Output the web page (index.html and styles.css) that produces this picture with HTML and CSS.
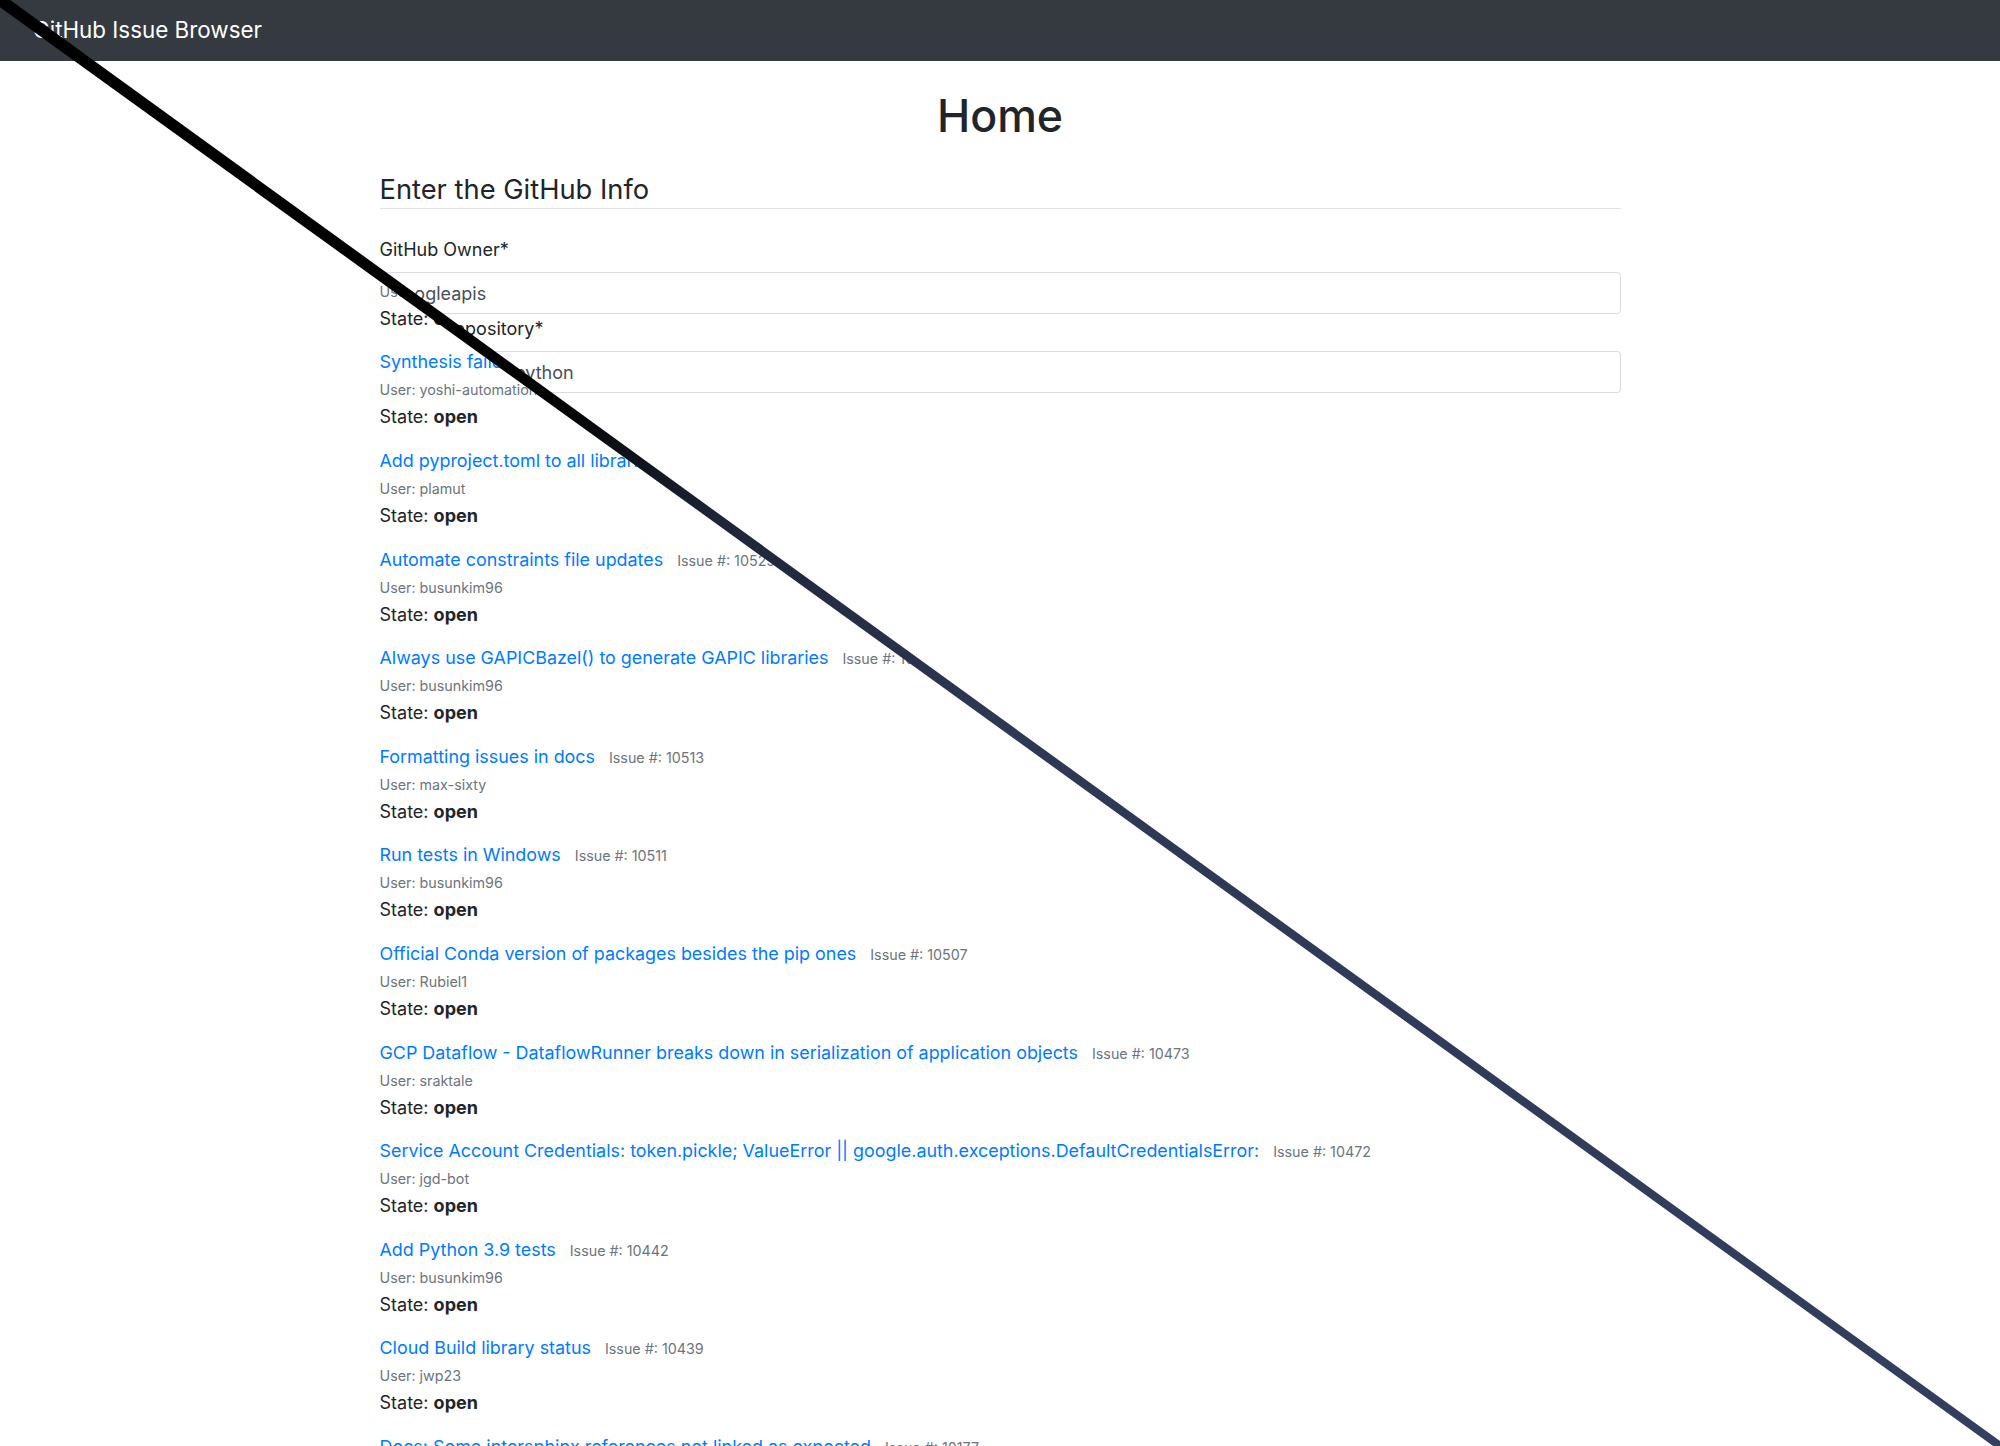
FILE: index.html
```html
<!DOCTYPE html>
<html lang="en">
<head>
<meta charset="utf-8">
<title>GitHub Issue Browser</title>
<link rel="stylesheet" href="styles.css">
</head>
<body>
<nav class="navbar"><span class="brand">GitHub Issue Browser</span></nav>
<div class="stage">
  <section class="layer layer-form">
    <div class="container">
      <h1 class="page-title">Home</h1>
      <h4 class="section-title">Enter the GitHub Info</h4>
      <form class="info-form">
        <label class="field-label" for="owner">GitHub Owner*</label>
        <input class="field-input" id="owner" type="text" value="googleapis">
        <label class="field-label" for="repo">GitHub Repository*</label>
        <input class="field-input" id="repo" type="text" value="google-cloud-python">
      </form>
    </div>
  </section>
  <section class="layer layer-list">
    <div class="container list-container">
      <div class="issue">
        <div class="issue-head"><a class="issue-link" href="#">Synthesis failed for google-cloud-python</a><span class="issue-num">Issue #: 10540</span></div>
        <div class="issue-user">User: yoshi-automation</div>
        <div class="issue-state">State: <b>open</b></div>
      </div>
      <div class="issue">
        <div class="issue-head"><a class="issue-link" href="#">Synthesis failed.</a><span class="issue-num">Issue #: 10531</span></div>
        <div class="issue-user">User: yoshi-automation</div>
        <div class="issue-state">State: <b>open</b></div>
      </div>
      <div class="issue">
        <div class="issue-head"><a class="issue-link" href="#">Add pyproject.toml to all libraries</a><span class="issue-num">Issue #: 10529</span></div>
        <div class="issue-user">User: plamut</div>
        <div class="issue-state">State: <b>open</b></div>
      </div>
      <div class="issue">
        <div class="issue-head"><a class="issue-link" href="#">Automate constraints file updates</a><span class="issue-num">Issue #: 10525</span></div>
        <div class="issue-user">User: busunkim96</div>
        <div class="issue-state">State: <b>open</b></div>
      </div>
      <div class="issue">
        <div class="issue-head"><a class="issue-link" href="#">Always use GAPICBazel() to generate GAPIC libraries</a><span class="issue-num">Issue #: 10519</span></div>
        <div class="issue-user">User: busunkim96</div>
        <div class="issue-state">State: <b>open</b></div>
      </div>
      <div class="issue">
        <div class="issue-head"><a class="issue-link" href="#">Formatting issues in docs</a><span class="issue-num">Issue #: 10513</span></div>
        <div class="issue-user">User: max-sixty</div>
        <div class="issue-state">State: <b>open</b></div>
      </div>
      <div class="issue">
        <div class="issue-head"><a class="issue-link" href="#">Run tests in Windows</a><span class="issue-num">Issue #: 10511</span></div>
        <div class="issue-user">User: busunkim96</div>
        <div class="issue-state">State: <b>open</b></div>
      </div>
      <div class="issue">
        <div class="issue-head"><a class="issue-link" href="#">Official Conda version of packages besides the pip ones</a><span class="issue-num">Issue #: 10507</span></div>
        <div class="issue-user">User: Rubiel1</div>
        <div class="issue-state">State: <b>open</b></div>
      </div>
      <div class="issue">
        <div class="issue-head"><a class="issue-link" href="#">GCP Dataflow - DataflowRunner breaks down in serialization of application objects</a><span class="issue-num">Issue #: 10473</span></div>
        <div class="issue-user">User: sraktale</div>
        <div class="issue-state">State: <b>open</b></div>
      </div>
      <div class="issue">
        <div class="issue-head"><a class="issue-link" href="#">Service Account Credentials: token.pickle; ValueError || google.auth.exceptions.DefaultCredentialsError:</a><span class="issue-num">Issue #: 10472</span></div>
        <div class="issue-user">User: jgd-bot</div>
        <div class="issue-state">State: <b>open</b></div>
      </div>
      <div class="issue">
        <div class="issue-head"><a class="issue-link" href="#">Add Python 3.9 tests</a><span class="issue-num">Issue #: 10442</span></div>
        <div class="issue-user">User: busunkim96</div>
        <div class="issue-state">State: <b>open</b></div>
      </div>
      <div class="issue">
        <div class="issue-head"><a class="issue-link" href="#">Cloud Build library status</a><span class="issue-num">Issue #: 10439</span></div>
        <div class="issue-user">User: jwp23</div>
        <div class="issue-state">State: <b>open</b></div>
      </div>
      <div class="issue">
        <div class="issue-head"><a class="issue-link" href="#">Docs: Some intersphinx references not linked as expected</a><span class="issue-num">Issue #: 10177</span></div>
        <div class="issue-user">User: tswast</div>
        <div class="issue-state">State: <b>open</b></div>
      </div>
    </div>
  </section>
</div>
<svg class="divider" viewBox="0 0 2000 1446" width="2000" height="1446" aria-hidden="true">
  <defs>
    <linearGradient id="divGrad" gradientUnits="userSpaceOnUse" x1="0" y1="0" x2="2000" y2="1446">
      <stop offset="0" stop-color="#000000"/>
      <stop offset="0.28" stop-color="#030304"/>
      <stop offset="0.36" stop-color="#1e2537"/>
      <stop offset="0.5" stop-color="#2d3854"/>
      <stop offset="1" stop-color="#323f5e"/>
    </linearGradient>
  </defs>
  <polygon fill="url(#divGrad)" points="-24.14,-24.86 418.16,295.55 652.88,466.11 1109.02,796.52 2030.01,1462.76 2025.33,1469.24 1103.98,803.48 647.26,473.89 411.72,304.45 -31.18,-15.14"/>
</svg>
</body>
</html>
```

FILE: styles.css
```css
html, body {
  margin: 0;
  padding: 0;
  height: 1446px;
  overflow: hidden;
  background: #fff;
}

body {
  font-family: Inter, "Noto Sans", "Liberation Sans", sans-serif;
  font-size: 18px;
  color: #212529;
  position: relative;
}

.navbar {
  height: 61px;
  background: #343a40;
  display: flex;
  align-items: center;
  padding-left: 33px;
}

.brand {
  color: #fff;
  font-size: 22.4px;
  line-height: 1;
}

.stage {
  display: grid;
  height: 1385px;
  overflow: hidden;
}

.layer {
  grid-area: 1 / 1;
  background: #fff;
  height: 1385px;
}

.layer-form {
  clip-path: polygon(84.37px 0, 2000px 0, 2000px 1385px);
  z-index: 1;
}

.layer-list {
  clip-path: polygon(0 0, 84.37px 0, 2000px 1385px, 0 1385px);
}

.container {
  width: 1241px;
  margin: 0 auto;
}

.page-title {
  margin: 29.4px 0 0;
  font-size: 44.7px;
  line-height: 1.2;
  font-weight: 500;
  text-align: center;
}

.section-title {
  margin: 30px 0 0;
  padding-bottom: 1.6px;
  font-size: 27.3px;
  line-height: 1.2;
  font-weight: 400;
  border-bottom: 1px solid #dee2e6;
}

.info-form {
  display: flex;
  flex-direction: column;
  padding-top: 27px;
}

.field-label {
  font-size: 18px;
  line-height: 27px;
}

.field-input {
  margin: 9px 0 1px;
  box-sizing: border-box;
  height: 42px;
  width: 100%;
  border: 1px solid #d8dde3;
  border-radius: 4px;
  padding: 0 12px;
  font-family: inherit;
  font-size: 18px;
  color: #495057;
  background: #fff;
}

.list-container {
  padding-top: 188.8px;
}

.issue {
  margin-bottom: 16.6px;
}

.issue-head {
  height: 27px;
  line-height: 27px;
  white-space: nowrap;
}

.issue-link {
  color: #007bff;
  text-decoration: none;
  font-size: 17.9px;
}

.issue-num {
  margin-left: 14px;
  font-size: 14.3px;
  line-height: 1;
  color: #6c757d;
}

.issue-user {
  margin-top: 1px;
  height: 27px;
  font-size: 14.3px;
  line-height: 27px;
  color: #6c757d;
}

.issue-state {
  height: 27px;
  font-size: 18px;
  line-height: 27px;
}

.issue-state b {
  font-weight: 700;
}

.divider {
  position: absolute;
  top: 0;
  left: 0;
  pointer-events: none;
  z-index: 5;
}
```
